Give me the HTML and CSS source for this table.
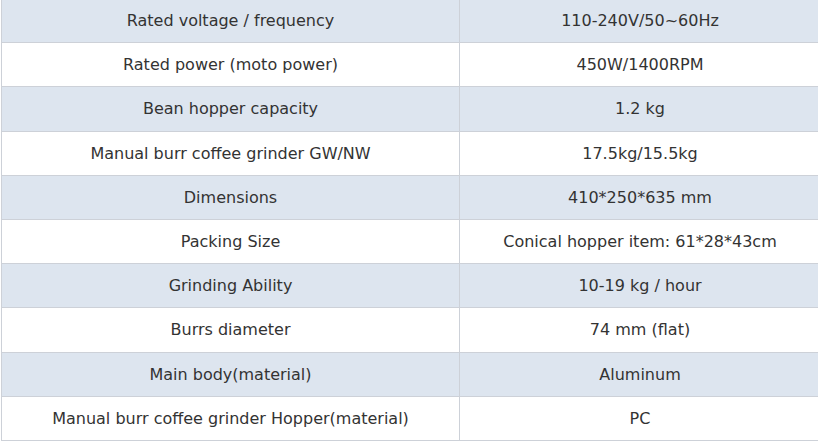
FILE: index.html
```html
<!DOCTYPE html>
<html>
<head>
<meta charset="utf-8">
<link rel="stylesheet" href="styles.css">
</head>
<body>
<table class="spec">
<tbody>
<tr class="alt"><td class="k">Rated voltage / frequency</td><td class="v">110-240V/50~60Hz</td></tr>
<tr><td class="k">Rated power (moto power)</td><td class="v">450W/1400RPM</td></tr>
<tr class="alt"><td class="k">Bean hopper capacity</td><td class="v">1.2 kg</td></tr>
<tr><td class="k">Manual burr coffee grinder GW/NW</td><td class="v">17.5kg/15.5kg</td></tr>
<tr class="alt"><td class="k">Dimensions</td><td class="v">410*250*635 mm</td></tr>
<tr><td class="k">Packing Size</td><td class="v">Conical hopper item: 61*28*43cm</td></tr>
<tr class="alt"><td class="k">Grinding Ability</td><td class="v">10-19 kg / hour</td></tr>
<tr><td class="k">Burrs diameter</td><td class="v">74 mm (flat)</td></tr>
<tr class="alt"><td class="k">Main body(material)</td><td class="v">Aluminum</td></tr>
<tr><td class="k">Manual burr coffee grinder Hopper(material)</td><td class="v">PC</td></tr>
</tbody>
</table>
</body>
</html>
```
FILE: styles.css
```css
html, body {
  margin: 0;
  padding: 0;
  background: #ffffff;
  overflow: hidden;
}
.spec {
  border-collapse: collapse;
  width: 820px;
  margin: -2px 0 0 1px;
  font-family: "DejaVu Sans", Verdana, sans-serif;
  font-size: 16px;
  color: #333333;
  table-layout: fixed;
}
.spec td {
  border: 1px solid #cdd1d8;
  height: 43.2px;
  padding: 0 8px;
  text-align: center;
  vertical-align: middle;
}
.spec td.k {
  width: 441px;
}
.spec tr.alt td {
  background: #dde5ef;
}
```
